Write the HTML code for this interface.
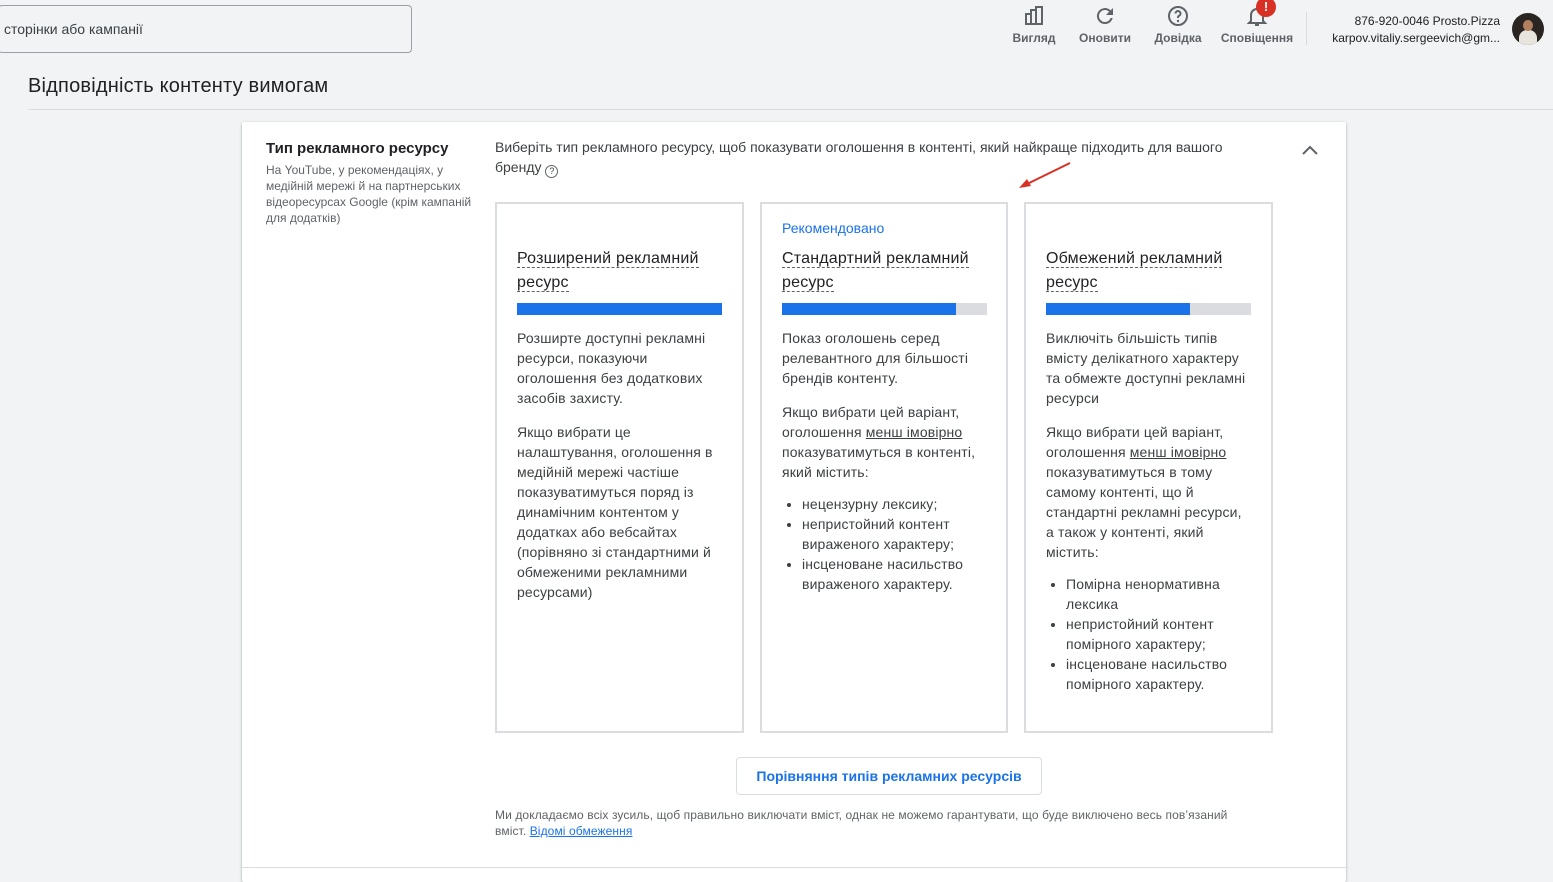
<!DOCTYPE html>
<html><head><meta charset="utf-8"><style>
*{box-sizing:border-box;margin:0;padding:0}
body{width:1553px;height:870px;overflow:hidden;background:#f1f3f4;font-family:"Liberation Sans",sans-serif;color:#3c4043;position:relative}
.abs{position:absolute}
.search{left:-2px;top:5px;width:414px;height:48px;border:1px solid #9aa0a6;border-radius:4px;background:#f1f3f4;font-size:14px;color:#3c4043;padding:15px 0 0 5px}
.tb{top:4px;text-align:center;font-size:12px;font-weight:bold;color:#5f6368}
.tb svg{display:block;margin:0 auto 3px}
h1{position:absolute;left:28px;top:75px;font-size:20px;font-weight:normal;color:#202124;letter-spacing:.2px}
.line{left:28px;top:109px;width:1525px;height:1px;background:#dadce0}
.card{left:242px;top:122px;width:1104px;height:760px;background:#fff;box-shadow:0 1px 2px rgba(60,64,67,.3),0 1px 3px rgba(60,64,67,.15);border-radius:2px}
.opt{top:202px;height:531px;border:2px solid #dadce0;background:#fff;padding:0 20px}
.opt h3{font-size:16px;font-weight:normal;color:#202124;line-height:24px;position:absolute;left:20px;top:43px;width:215px;letter-spacing:.2px}
.opt h3 span{border-bottom:1px dashed #5f6368}
.bar{position:absolute;left:20px;top:99px;width:205px;height:12px;background:#dadce0}
.bar i{display:block;height:12px;background:#1a73e8}
.txt{position:absolute;left:20px;top:124px;width:205px;font-size:14px;line-height:20px;color:#3c4043;letter-spacing:.15px}
.txt p{margin-bottom:14px}
.txt ul{padding-left:20px;margin-top:-2px}
.u{text-decoration:underline}
</style></head><body>
<div class="abs search">сторінки або кампанії</div>
<div class="abs tb" style="left:1012px;width:44px"><svg width="24" height="24" viewBox="0 0 24 24"><path d="M4 20V10h5V6h5V3h6v17z" fill="none" stroke="#5f6368" stroke-width="2"/><path d="M9 10v10M14 6v14" stroke="#5f6368" stroke-width="2"/></svg>Вигляд</div>
<div class="abs tb" style="left:1078px;width:54px"><svg width="24" height="24" viewBox="0 0 24 24"><path d="M17.6 6.4A8 8 0 1 0 19.7 14h-2.1a6 6 0 1 1-1.4-6.2L13 11h7V4z" fill="#5f6368"/></svg>Оновити</div>
<div class="abs tb" style="left:1152px;width:52px"><svg width="24" height="24" viewBox="0 0 24 24"><circle cx="12" cy="12" r="9" fill="none" stroke="#5f6368" stroke-width="2"/><path d="M9.5 9.5a2.5 2.5 0 1 1 3.5 2.3c-.7.4-1 .8-1 1.7v.5" fill="none" stroke="#5f6368" stroke-width="2"/><circle cx="12" cy="17" r="1.2" fill="#5f6368"/></svg>Довідка</div>
<div class="abs tb" style="left:1220px;width:74px"><svg width="24" height="24" viewBox="0 0 24 24"><path d="M6 17V11a6 6 0 0 1 12 0v6l2 2H4z" fill="none" stroke="#5f6368" stroke-width="2"/><path d="M10 21h4" stroke="#5f6368" stroke-width="2"/></svg>Сповіщення</div>
<div class="abs" style="left:1256px;top:-3px;width:20px;height:20px;border-radius:50%;background:#d93025;color:#fff;font-weight:bold;font-size:13px;text-align:center;line-height:20px">!</div>
<div class="abs" style="left:1306px;top:12px;width:1px;height:33px;background:#dadce0"></div>
<div class="abs" style="left:1310px;top:13px;width:190px;text-align:right;font-size:12px;line-height:17px;color:#202124">876-920-0046 Prosto.Pizza<br>karpov.vitaliy.sergeevich@gm...</div>
<div class="abs" style="left:1512px;top:13px;width:32px;height:32px;border-radius:50%;background:#2a2522;overflow:hidden"><div style="position:absolute;left:7px;top:17px;width:18px;height:16px;background:#e8e4de;border-radius:8px 8px 0 0"></div><div style="position:absolute;left:11px;top:7px;width:10px;height:11px;background:#b08060;border-radius:50%"></div></div>
<h1>Відповідність контенту вимогам</h1>
<div class="abs line"></div>
<div class="abs card"></div>
<div class="abs" style="left:266px;top:140px;font-size:15px;font-weight:bold;color:#202124">Тип рекламного ресурсу</div>
<div class="abs" style="left:266px;top:162px;width:212px;font-size:12px;line-height:16px;color:#5f6368">На YouTube, у рекомендаціях, у медійній мережі й на партнерських відеоресурсах Google (крім кампаній для додатків)</div>
<div class="abs" style="left:495px;top:137px;width:770px;font-size:14px;line-height:20px;color:#3c4043">Виберіть тип рекламного ресурсу, щоб показувати оголошення в контенті, який найкраще підходить для вашого бренду <span style="display:inline-block;width:13px;height:13px;border:1.5px solid #5f6368;border-radius:50%;font-size:9px;line-height:10px;text-align:center;vertical-align:-2px">?</span></div>
<svg class="abs" style="left:1300px;top:142px" width="20" height="16"><path d="M3 12l7-7 7 7" fill="none" stroke="#5f6368" stroke-width="2"/></svg>
<svg class="abs" style="left:1015px;top:160px" width="60" height="32"><path d="M55 3L8 26" stroke="#d93025" stroke-width="2"/><path d="M4 28l12-2-4-7z" fill="#d93025"/></svg>

<div class="abs opt" style="left:495px;width:249px"><h3><span>Розширений рекламний</span><br><span>ресурс</span></h3><div class="bar"><i style="width:205px"></i></div>
<div class="txt"><p>Розширте доступні рекламні ресурси, показуючи оголошення без додаткових засобів захисту.</p><p>Якщо вибрати це налаштування, оголошення в медійній мережі частіше показуватимуться поряд із динамічним контентом у додатках або вебсайтах (порівняно зі стандартними й обмеженими рекламними ресурсами)</p></div></div>

<div class="abs opt" style="left:760px;width:248px"><div style="position:absolute;left:20px;top:16px;font-size:14px;color:#1a73e8">Рекомендовано</div><h3><span>Стандартний рекламний</span><br><span>ресурс</span></h3><div class="bar"><i style="width:174px"></i></div>
<div class="txt"><p>Показ оголошень серед релевантного для більшості брендів контенту.</p><p>Якщо вибрати цей варіант, оголошення <span class="u">менш імовірно</span> показуватимуться в контенті, який містить:</p><ul><li>нецензурну лексику;</li><li>непристойний контент вираженого характеру;</li><li>інсценоване насильство вираженого характеру.</li></ul></div></div>

<div class="abs opt" style="left:1024px;width:249px"><h3><span>Обмежений рекламний</span><br><span>ресурс</span></h3><div class="bar"><i style="width:144px"></i></div>
<div class="txt"><p>Виключіть більшість типів вмісту делікатного характеру та обмежте доступні рекламні ресурси</p><p>Якщо вибрати цей варіант, оголошення <span class="u">менш імовірно</span> показуватимуться в тому самому контенті, що й стандартні рекламні ресурси, а також у контенті, який містить:</p><ul><li>Помірна ненормативна лексика</li><li>непристойний контент помірного характеру;</li><li>інсценоване насильство помірного характеру.</li></ul></div></div>

<div class="abs" style="left:736px;top:757px;width:306px;height:38px;border:1px solid #dadce0;border-radius:4px;text-align:center;line-height:36px;font-size:14px;font-weight:bold;color:#1a73e8">Порівняння типів рекламних ресурсів</div>
<div class="abs" style="left:495px;top:807px;width:800px;font-size:12px;line-height:16px;color:#5f6368;letter-spacing:.1px">Ми докладаємо всіх зусиль, щоб правильно виключати вміст, однак не можемо гарантувати, що буде виключено весь пов’язаний<br>вміст. <span class="u" style="color:#1a73e8">Відомі обмеження</span></div>
<div class="abs" style="left:242px;top:867px;width:1104px;height:1px;background:#dadce0"></div>
</body></html>
